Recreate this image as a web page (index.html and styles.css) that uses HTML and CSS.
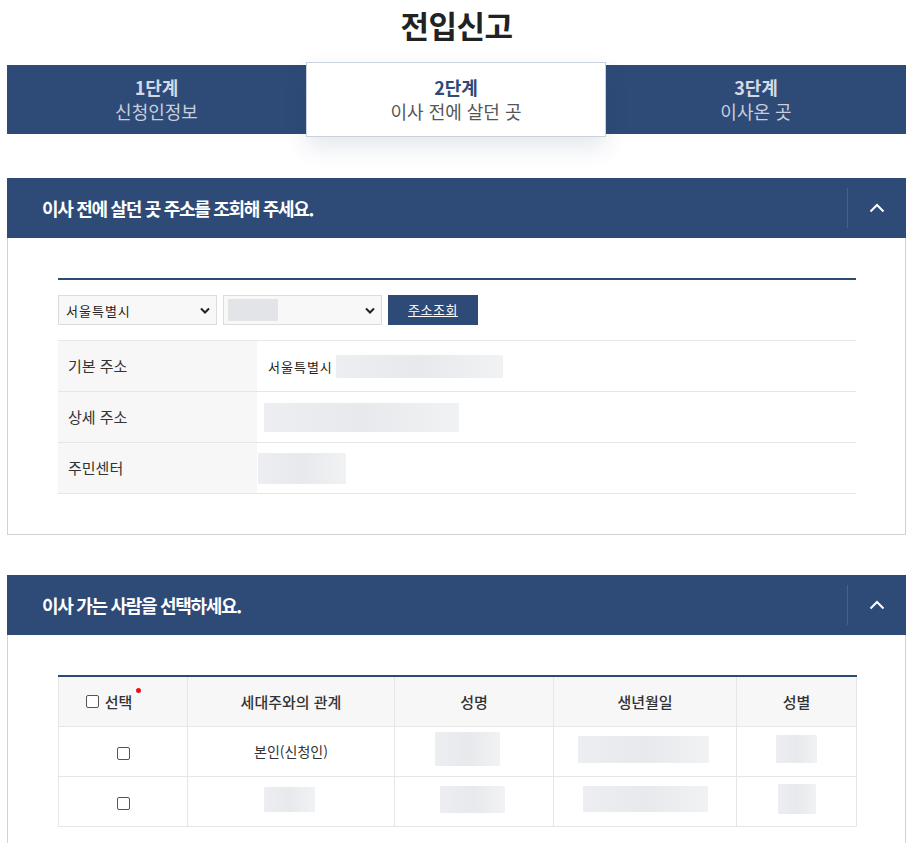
FILE: index.html
```html
<!DOCTYPE html>
<html lang="ko">
<head>
<meta charset="utf-8">
<title>전입신고</title>
<link rel="stylesheet" href="styles.css">
</head>
<body>
<div class="page">
  <h1 class="title">전입신고</h1>
  <div class="steps">
    <div class="step"><strong>1단계</strong><span>신청인정보</span></div>
    <div class="step active"><strong>2단계</strong><span>이사 전에 살던 곳</span></div>
    <div class="step"><strong>3단계</strong><span>이사온 곳</span></div>
  </div>

  <section class="panel first">
    <div class="panel-head">
      <h2>이사 전에 살던 곳 주소를 조회해 주세요.</h2>
      <button class="toggle" type="button" aria-label="접기">
        <svg width="16" height="10" viewBox="0 0 16 10"><path d="M1.5 8.5 L8 2 L14.5 8.5" fill="none" stroke="#fff" stroke-width="2"/></svg>
      </button>
    </div>
    <div class="panel-body">
      <div class="search-row">
        <div class="select"><span>서울특별시</span><svg class="caret" width="10" height="7" viewBox="0 0 10 7"><path d="M1 1.5 L5 5.5 L9 1.5" fill="none" stroke="#222" stroke-width="2"/></svg></div>
        <div class="select"><span class="blur b-sel"></span><svg class="caret" width="10" height="7" viewBox="0 0 10 7"><path d="M1 1.5 L5 5.5 L9 1.5" fill="none" stroke="#222" stroke-width="2"/></svg></div>
        <a class="btn" href="#">주소조회</a>
      </div>
      <div class="addr">
        <div class="addr-row">
          <div class="th">기본 주소</div>
          <div class="td"><span class="small">서울특별시</span><span class="blur b-addr"></span></div>
        </div>
        <div class="addr-row">
          <div class="th">상세 주소</div>
          <div class="td"><span class="blur b-detail"></span></div>
        </div>
        <div class="addr-row">
          <div class="th">주민센터</div>
          <div class="td tight"><span class="blur b-center"></span></div>
        </div>
      </div>
    </div>
  </section>

  <section class="panel">
    <div class="panel-head">
      <h2>이사 가는 사람을 선택하세요.</h2>
      <button class="toggle" type="button" aria-label="접기">
        <svg width="16" height="10" viewBox="0 0 16 10"><path d="M1.5 8.5 L8 2 L14.5 8.5" fill="none" stroke="#fff" stroke-width="2"/></svg>
      </button>
    </div>
    <div class="panel-body">
      <table class="people">
        <colgroup>
          <col class="c1"><col class="c2"><col class="c3"><col class="c4"><col class="c5">
        </colgroup>
        <thead>
          <tr>
            <th><label class="chk-all"><span class="box"></span>선택<i class="req"></i></label></th>
            <th>세대주와의 관계</th>
            <th>성명</th>
            <th>생년월일</th>
            <th>성별</th>
          </tr>
        </thead>
        <tbody>
          <tr>
            <td><span class="box"></span></td>
            <td class="rel">본인(신청인)</td>
            <td><span class="blur r1c3"></span></td>
            <td><span class="blur r1c4"></span></td>
            <td><span class="blur r1c5"></span></td>
          </tr>
          <tr>
            <td><span class="box"></span></td>
            <td><span class="blur r2c2"></span></td>
            <td><span class="blur r2c3"></span></td>
            <td><span class="blur r2c4"></span></td>
            <td><span class="blur r2c5"></span></td>
          </tr>
        </tbody>
      </table>
    </div>
  </section>
</div>
</body>
</html>
```
FILE: styles.css
```css
* { box-sizing: border-box; }
html, body { margin: 0; padding: 0; background: #fff; }
body {
  font-family: "Noto Sans CJK KR", "Noto Sans", sans-serif;
  color: #333;
  overflow: hidden;
  height: 843px;
}
.page { margin: 0 6px 0 7px; }

.title {
  margin: 0;
  padding-top: 4px;
  height: 62px;
  text-align: center;
  font-size: 31px;
  font-weight: 700;
  color: #222;
  letter-spacing: -0.5px;
  line-height: 42px;
}

.steps {
  display: grid;
  grid-template-columns: 299px 300px 300px;
  height: 75px;
  align-items: center;
}
.step {
  height: 69px;
  background: #2e4a77;
  display: flex;
  flex-direction: column;
  align-items: center;
  justify-content: center;
  line-height: 24px;
  padding-bottom: 2px;
}
.step strong { font-size: 18px; font-weight: 700; color: #d3dae6; }
.step span { font-size: 18px; font-weight: 400; color: #c6cfdd; }
.step.active {
  height: 75px;
  background: #fff;
  border: 1px solid #c9d1dd;
  box-shadow: 0 10px 22px rgba(40, 60, 100, 0.12);
  position: relative;
  z-index: 1;
}
.step.active strong { color: #2e4a77; }
.step.active span { color: #555; }

.panel { margin-top: 40px; }
.panel.first { margin-top: 41px; }
.panel-head {
  height: 60px;
  background: #2e4a77;
  display: flex;
  align-items: center;
  justify-content: space-between;
  padding-left: 35px;
}
.panel-head h2 {
  margin: 0;
  color: #fff;
  font-size: 18px;
  font-weight: 700;
  letter-spacing: -1.3px;
}
.toggle {
  width: 59px;
  height: 40px;
  border: 0;
  border-left: 1px solid #46618c;
  background: transparent;
  display: flex;
  align-items: center;
  justify-content: center;
  padding: 0;
  margin-right: 0;
}
.panel-body {
  border: 1px solid #d2d2d2;
  border-top: 0;
  padding: 40px 49px 40px 50px;
}

.search-row {
  border-top: 2px solid #2e4a77;
  padding-top: 15px;
  display: flex;
  gap: 6px;
  height: 62px;
}
.select {
  width: 159px;
  height: 30px;
  border: 1px solid #dcdcdc;
  background: #f8f8f8;
  display: flex;
  align-items: center;
  justify-content: space-between;
  padding: 0 6px 0 7px;
  font-size: 13px;
  letter-spacing: 1px;
  color: #222;
}
.caret { margin-right: 0; }
.btn {
  width: 90px;
  height: 30px;
  background: #2e4a77;
  color: #fff;
  font-size: 13px;
  letter-spacing: 0.5px;
  display: flex;
  align-items: center;
  justify-content: center;
  text-decoration: underline;
  text-underline-offset: 1px;
  padding-bottom: 2px;
}

.blur {
  display: inline-block;
  background: linear-gradient(90deg, #eceef1, #e8e9ec 50%, #f1f2f4);
  border-radius: 1px;
}
.b-sel { width: 50px; height: 22px; margin-left: -3px; background: #e2e4e8; }

.addr { border-top: 1px solid #e8e8e8; }
.addr-row {
  display: grid;
  grid-template-columns: 199px 1fr;
  height: 51px;
  border-bottom: 1px solid #e6e6e6;
}
.addr-row .th {
  background: #f7f7f7;
  padding-left: 10px;
  display: flex;
  align-items: center;
  font-size: 15px;
  color: #333;
  padding-bottom: 2px;
}
.addr-row .td {
  display: flex;
  align-items: center;
  padding-left: 7px;
}
.addr-row .td.tight { padding-left: 1px; }
.small { font-size: 13px; color: #222; margin: 0 3px 0 4px; letter-spacing: 1px; }
.b-addr { width: 167px; height: 23px; }
.b-detail { width: 195px; height: 29px; }
.b-center { width: 88px; height: 31px; }

.people {
  width: 100%;
  border-collapse: collapse;
  border-top: 2px solid #2e4a77;
  margin-top: 0;
  table-layout: fixed;
}
.people col.c1 { width: 129px; }
.people col.c2 { width: 207px; }
.people col.c3 { width: 159px; }
.people col.c4 { width: 183px; }
.people col.c5 { width: 120px; }
.people th, .people td {
  border: 1px solid #e6e6e6;
  text-align: center;
  vertical-align: middle;
  height: 50px;
  padding: 0;
}
.people th {
  background: #f7f7f7;
  font-size: 15px;
  font-weight: 500;
  color: #333;
  border-top: 0;
}
.people td { font-size: 14px; color: #333; }
.chk-all {
  display: inline-flex;
  align-items: center;
  position: relative;
  margin-left: -28px;
}
.chk-all .box { margin-right: 6px; }
.req {
  position: absolute;
  right: -9px;
  top: -3px;
  width: 5px;
  height: 5px;
  border-radius: 50%;
  background: #e5141e;
}
.box {
  display: inline-block;
  width: 13px;
  height: 13px;
  border: 1px solid #555;
  border-radius: 2px;
  background: #fff;
  vertical-align: middle;
}
.rel { padding-top: 2px; }
.r1c3 { width: 65px; height: 34px; margin-right: 14px; }
.r1c4 { width: 131px; height: 27px; margin-right: 4px; }
.r1c5 { width: 41px; height: 28px; }
.r2c2 { width: 51px; height: 25px; margin-right: 4px; }
.r2c3 { width: 65px; height: 27px; margin-right: 4px; }
.r2c4 { width: 125px; height: 26px; }
.r2c5 { width: 38px; height: 30px; }
```
